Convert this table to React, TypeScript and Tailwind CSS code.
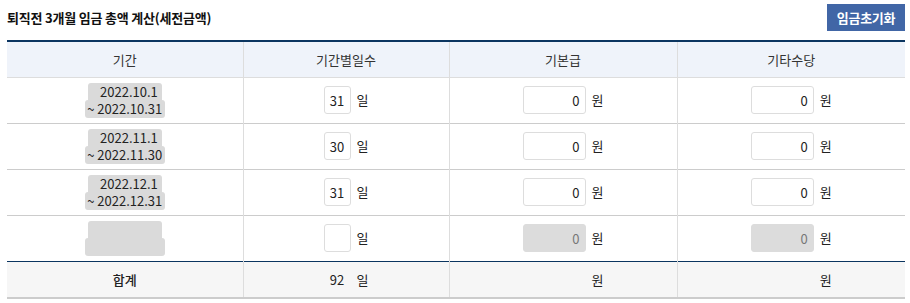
import { useState } from "react";

type Row = { from: string; to: string; days: string; base: string; etc: string; disabled?: boolean };

const rows: Row[] = [
  { from: "2022.10.1", to: "~ 2022.10.31", days: "31", base: "0", etc: "0" },
  { from: "2022.11.1", to: "~ 2022.11.30", days: "30", base: "0", etc: "0" },
  { from: "2022.12.1", to: "~ 2022.12.31", days: "31", base: "0", etc: "0" },
  { from: "", to: "", days: "", base: "0", etc: "0", disabled: true },
];

function Period({ from, to }: { from: string; to: string }) {
  return (
    <div className="flex flex-col items-center text-[13px] leading-[17px] text-[#222]">
      <span className="block w-[74px] h-[17px] rounded-t-[3px] bg-[#dadada] pr-[4px] text-right">{from}</span>
      <span className="block w-[80px] h-[18px] rounded-[3px] bg-[#dadada] text-center leading-[18px]">{to}</span>
    </div>
  );
}

function Unit({ children }: { children: React.ReactNode }) {
  return <span className="ml-[6px] text-[13px] text-[#222]">{children}</span>;
}

export default function App() {
  const [data] = useState(rows);
  const total = data.reduce((s, r) => s + (Number(r.days) || 0), 0);

  const cell = "border-r border-[#dddddd] last:border-r-0 text-center align-middle";
  const money = (disabled?: boolean) =>
    `h-[28px] w-[63px] rounded-[3px] border pr-[5px] text-right text-[13px] outline-none ${
      disabled ? "border-[#dcdcdc] bg-[#dcdcdc] text-[#777]" : "border-[#dddddd] bg-white text-[#222]"
    }`;

  return (
    <div className="w-[910px] h-[303px] bg-white font-['Noto_Sans_CJK_KR','Noto_Sans',sans-serif] text-[#222]">
      <div className="flex items-center justify-between pl-[7px] pr-[5px] pt-[4px] mb-[9px]">
        <h2 className="text-[13px] font-bold tracking-[-0.2px] text-[#111]">퇴직전 3개월 임금 총액 계산(세전금액)</h2>
        <button className="h-[27px] w-[78px] bg-[#4166a6] text-[13px] font-bold tracking-[-0.3px] text-white">
          임금초기화
        </button>
      </div>

      <table className="ml-[7px] w-[898px] table-fixed border-collapse border-t-2 border-[#0b3560]">
        <colgroup>
          <col className="w-[236px]" />
          <col className="w-[206px]" />
          <col className="w-[228px]" />
          <col className="w-[228px]" />
        </colgroup>
        <thead>
          <tr className="h-[36px] bg-[#eff3fa] border-b border-[#dddddd] text-[13px] text-[#333]">
            <th className={`${cell} font-normal`}>기간</th>
            <th className={`${cell} font-normal`}>기간별일수</th>
            <th className={`${cell} font-normal`}>기본급</th>
            <th className={`${cell} font-normal`}>기타수당</th>
          </tr>
        </thead>
        <tbody>
          {data.map((r, i) => (
            <tr key={i} className="h-[46px] border-b border-[#cccccc] last:border-b-0">
              <td className={cell}>
                <Period from={r.from} to={r.to} />
              </td>
              <td className={cell}>
                <div className="flex items-center justify-center">
                  <input
                    readOnly
                    value={r.days}
                    className="h-[28px] w-[27px] rounded-[3px] border border-[#dddddd] bg-white text-center text-[13px] text-[#222] outline-none"
                  />
                  <Unit>일</Unit>
                </div>
              </td>
              <td className={cell}>
                <div className="flex items-center justify-center">
                  <input readOnly value={r.base} className={money(r.disabled)} />
                  <Unit>원</Unit>
                </div>
              </td>
              <td className={cell}>
                <div className="flex items-center justify-center">
                  <input readOnly value={r.etc} className={money(r.disabled)} />
                  <Unit>원</Unit>
                </div>
              </td>
            </tr>
          ))}
        </tbody>
        <tfoot>
          <tr className="h-[37px] bg-[#f6f6f6] border-t border-[#0b3560] border-b-2 border-b-[#cccccc] text-[13px]">
            <td className={`${cell} font-medium`}>합계</td>
            <td className={cell}>
              <div className="flex items-center justify-center">
                <span className="w-[27px] text-center">{total}</span>
                <Unit>일</Unit>
              </div>
            </td>
            <td className={cell}>
              <div className="flex items-center justify-center">
                <span className="w-[63px]" />
                <Unit>원</Unit>
              </div>
            </td>
            <td className={cell}>
              <div className="flex items-center justify-center">
                <span className="w-[63px]" />
                <Unit>원</Unit>
              </div>
            </td>
          </tr>
        </tfoot>
      </table>
    </div>
  );
}
